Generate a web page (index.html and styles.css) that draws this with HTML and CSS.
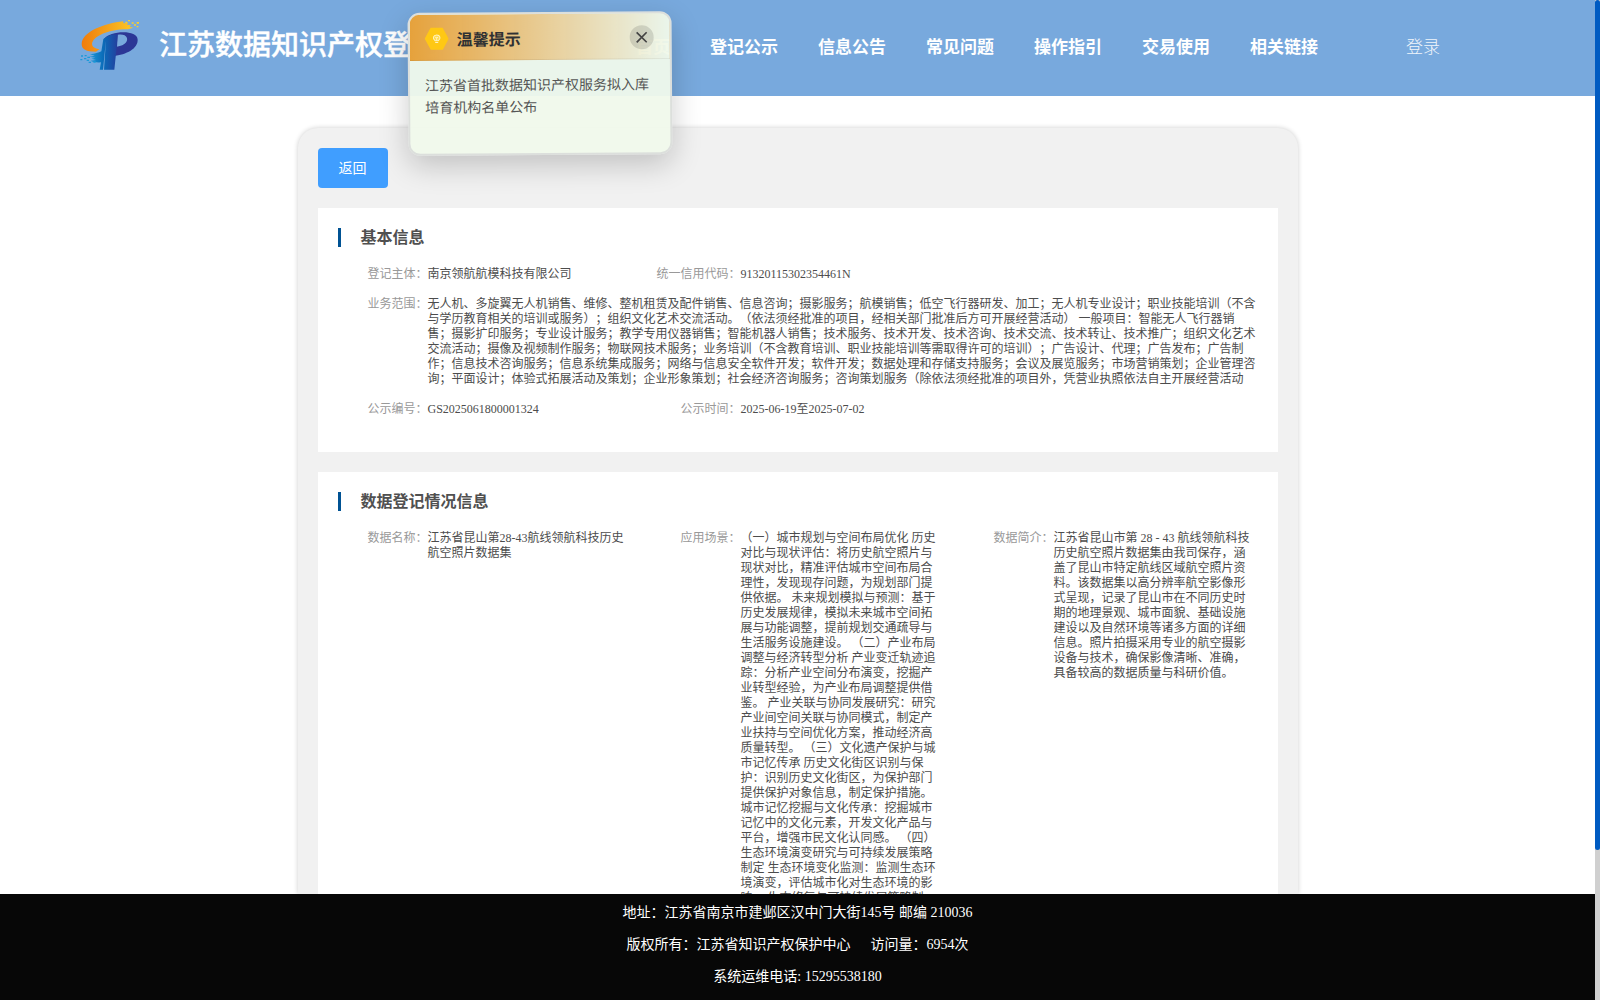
FILE: index.html
```html
<!DOCTYPE html>
<html lang="zh-CN">
<head>
  <meta charset="UTF-8">
  <title>江苏数据知识产权登记平台</title>
  <meta name="viewport" content="width=device-width, initial-scale=1.0">
  <link rel="stylesheet" href="styles.css">
</head>
<body>

  <div class="page">
    <header class="header">
      <svg class="logo" viewBox="60 57 180 156">
        <defs>
          <linearGradient id="gold" x1="0" y1="0" x2="1" y2="0">
            <stop offset="0" stop-color="#f07c0c"/>
            <stop offset="1" stop-color="#fcc826"/>
          </linearGradient>
          <linearGradient id="blue" x1="0" y1="0" x2="1" y2="0">
            <stop offset="0" stop-color="#1c9ad8"/>
            <stop offset="0.5" stop-color="#0b6bb8"/>
            <stop offset="1" stop-color="#233f9e"/>
          </linearGradient>
        </defs>
        <path fill="url(#gold)" d="M190 64C132 70 66 96 65 132C65 148 78 155 108 155L118 148C98 145 92 134 99 123C110 103 160 86 204 88L220 83L208 80L214 75L200 74L205 69L190 70Z"/>
        <path fill="#2c3796" d="M132 117C150 92 232 88 233 119C234 145 200 164 160 168L160 142C190 139 204 128 201 114C198 104 186 102 173 104L171 142L150 150Z"/>
        <path fill="url(#blue)" d="M138 112Q152 102 173 103L170 142L163 209H132L138 118L129 209H119L123 187Q100 188 92 182L108 180L94 176L106 173L88 170L104 167L90 163Q112 160 124 154L130 117Z"/>
        <path fill="#fcd02a" d="M204 60h6v4h-6zM196 65h6v4h-6zM215 67h6v4h-6zM230 66h7v5h-7zM222 73h6v4h-6zM230 78h5v4h-5z"/>
        <path fill="#1c9ad8" d="M63 166h6v4h-6zM74 165h6v4h-6zM82 170h8v4h-8zM61 177h6v4h-6zM72 174h7v4h-7zM80 179h7v4h-7zM86 185h7v4h-7zM100 184h7v4h-7z"/>
      </svg>
      <h1 class="site-name">江苏数据知识产权登记</h1>
      <nav class="nav">
        <a>首页</a>
        <a>登记公示</a>
        <a>信息公告</a>
        <a>常见问题</a>
        <a>操作指引</a>
        <a>交易使用</a>
        <a>相关链接</a>
      </nav>
      <a class="login">登录</a>
    </header>

    <main class="container">
      <button class="back">返回</button>

      <section class="card">
        <h2 class="card-title">基本信息</h2>
        <div class="row">
          <div class="item"><span class="label">登记主体：</span><span class="value">南京领航航模科技有限公司</span></div>
          <div class="item"><span class="label">统一信用代码：</span><span class="value">91320115302354461N</span></div>
        </div>
        <div class="row">
          <div class="item"><span class="label">业务范围：</span><span class="value">无人机、多旋翼无人机销售、维修、整机租赁及配件销售、信息咨询；摄影服务；航模销售；低空飞行器研发、加工；无人机专业设计；职业技能培训（不含<br>与学历教育相关的培训或服务）；组织文化艺术交流活动。（依法须经批准的项目，经相关部门批准后方可开展经营活动） 一般项目：智能无人飞行器销<br>售；摄影扩印服务；专业设计服务；教学专用仪器销售；智能机器人销售；技术服务、技术开发、技术咨询、技术交流、技术转让、技术推广；组织文化艺术<br>交流活动；摄像及视频制作服务；物联网技术服务；业务培训（不含教育培训、职业技能培训等需取得许可的培训）；广告设计、代理；广告发布；广告制<br>作；信息技术咨询服务；信息系统集成服务；网络与信息安全软件开发；软件开发；数据处理和存储支持服务；会议及展览服务；市场营销策划；企业管理咨<br>询；平面设计；体验式拓展活动及策划；企业形象策划；社会经济咨询服务；咨询策划服务（除依法须经批准的项目外，凭营业执照依法自主开展经营活动</span></div>
        </div>
        <div class="row">
          <div class="item"><span class="label">公示编号：</span><span class="value">GS2025061800001324</span></div>
          <div class="item"><span class="label">公示时间：</span><span class="value">2025-06-19至2025-07-02</span></div>
        </div>
      </section>

      <section class="card">
        <h2 class="card-title">数据登记情况信息</h2>
        <div class="row">
          <div class="item"><span class="label">数据名称：</span><span class="value">江苏省昆山第28-43航线领航科技历史<br>航空照片数据集</span></div>
          <div class="item"><span class="label">应用场景：</span><span class="value">（一）城市规划与空间布局优化 历史<br>对比与现状评估：将历史航空照片与<br>现状对比，精准评估城市空间布局合<br>理性，发现现存问题，为规划部门提<br>供依据。 未来规划模拟与预测：基于<br>历史发展规律，模拟未来城市空间拓<br>展与功能调整，提前规划交通疏导与<br>生活服务设施建设。 （二）产业布局<br>调整与经济转型分析 产业变迁轨迹追<br>踪：分析产业空间分布演变，挖掘产<br>业转型经验，为产业布局调整提供借<br>鉴。 产业关联与协同发展研究：研究<br>产业间空间关联与协同模式，制定产<br>业扶持与空间优化方案，推动经济高<br>质量转型。 （三）文化遗产保护与城<br>市记忆传承 历史文化街区识别与保<br>护：识别历史文化街区，为保护部门<br>提供保护对象信息，制定保护措施。<br>城市记忆挖掘与文化传承：挖掘城市<br>记忆中的文化元素，开发文化产品与<br>平台，增强市民文化认同感。 （四）<br>生态环境演变研究与可持续发展策略<br>制定 生态环境变化监测：监测生态环<br>境演变，评估城市化对生态环境的影<br>响。 生态修复与可持续发展策略制</span></div>
          <div class="item"><span class="label">数据简介：</span><span class="value">江苏省昆山市第 28 - 43 航线领航科技<br>历史航空照片数据集由我司保存，涵<br>盖了昆山市特定航线区域航空照片资<br>料。该数据集以高分辨率航空影像形<br>式呈现，记录了昆山市在不同历史时<br>期的地理景观、城市面貌、基础设施<br>建设以及自然环境等诸多方面的详细<br>信息。照片拍摄采用专业的航空摄影<br>设备与技术，确保影像清晰、准确，<br>具备较高的数据质量与科研价值。</span></div>
        </div>
      </section>
    </main>

    <footer class="footer">
      <p>地址：江苏省南京市建邺区汉中门大街145号 邮编 210036</p>
      <p>版权所有：江苏省知识产权保护中心<span class="visits">访问量：6954次</span></p>
      <p>系统运维电话: 15295538180</p>
    </footer>
  </div>

  <div class="scrollbar"><div class="thumb"></div></div>

  <div class="notice">
    <div class="notice-head">
      <svg class="notice-icon" viewBox="0 0 24 24">
        <path fill="#ffc814" d="M6 1H18L24 12L18 23H6L0 12Z"/>
        <g fill="none" stroke="#fff3c0" stroke-width="1">
          <path fill="#ffda50" d="M10.500 14C7.400 12 8.500 8.200 12 8.200S16.600 12 13.500 14Z"/>
          <path d="M10.500 15.700H13.500M12 14V11M10.700 10.500L12 11.500L13.300 10.500"/>
        </g>
      </svg>
      <span class="notice-title">温馨提示</span>
      <span class="notice-close">
        <svg viewBox="0 0 12 12"><path d="M1 1L11 11M11 1L1 11" stroke="#444" stroke-width="1.700"/></svg>
      </span>
    </div>
    <div class="notice-body">江苏省首批数据知识产权服务拟入库<br>培育机构名单公布</div>
  </div>

</body>
</html>
```
FILE: styles.css
```css
* {
  box-sizing: border-box;
}

body {
  margin: 0;
  height: 1000px;
  display: flex;
  overflow: hidden;
  background: #fff;
  font-family: "Liberation Serif", "Noto Sans CJK SC", serif;
  text-spacing-trim: space-all;
}

.page {
  flex: 1;
  height: 1000px;
  display: flex;
  flex-direction: column;
}

.header {
  flex: none;
  height: 96px;
  padding-left: 80px;
  display: flex;
  align-items: center;
  background: #78a9dd;
  color: #fff;
}

.logo {
  width: 60px;
  height: 52px;
  margin-top: -6px;
}

.site-name {
  width: 477px;
  margin: -5px 0 0 19px;
  font-size: 28px;
  font-weight: 500;
  line-height: 40px;
  white-space: nowrap;
  -webkit-text-stroke: 0.4px #fff;
}

.nav {
  display: flex;
  gap: 40px;
  font-size: 17px;
  font-weight: bold;
  line-height: 24px;
  margin-top: -1px;
}

.login {
  margin: -1px 0 0 88px;
  font-size: 17px;
  line-height: 24px;
  font-weight: 300;
  opacity: 0.9;
}

.container {
  flex: 1;
  min-height: 0;
  width: 1000px;
  margin: 32px auto 0;
  padding: 20px 20px 0;
  overflow: hidden;
  background: #f1f1f1;
  border-radius: 20px 20px 0 0;
  box-shadow: 0 0 5px rgba(0, 0, 0, 0.2);
}

.back {
  display: block;
  width: 70px;
  height: 40px;
  padding: 0 0 2px;
  border: 0;
  border-radius: 4px;
  background: #409eff;
  color: #fff;
  font: 14px "Noto Sans CJK SC", sans-serif;
}

.card {
  margin-top: 20px;
  padding: 20px 0 20px 20px;
  background: #fff;
}

.card-title {
  margin: 0 0 20px;
  padding-left: 20px;
  border-left: 3px solid #005293;
  font-size: 16px;
  line-height: 19px;
  color: #505050;
}

.row {
  display: flex;
  margin-bottom: 15px;
  font-size: 12px;
  line-height: 15px;
  white-space: nowrap;
}

.item {
  display: flex;
  width: 313px;
}

.label {
  flex: none;
  width: 90px;
  text-align: right;
  color: #999;
}

.value {
  color: #4c4c4c;
}

.footer {
  flex: none;
  height: 106px;
  padding-top: 3px;
  background: #070707;
  color: #fff;
  font-size: 14px;
  text-align: center;
}

.footer p {
  margin: 0;
  line-height: 32px;
}

.visits {
  margin-left: 20px;
}

.scrollbar {
  width: 5px;
  background: #d0d0d0;
}

.thumb {
  height: 850px;
  border-radius: 3px;
  background: #005bc2;
}

.notice {
  position: absolute;
  left: 408px;
  top: 12px;
  width: 264px;
  height: 143px;
  border: 2px solid #dcdfdc;
  border-radius: 12px;
  overflow: hidden;
  background: rgba(240, 249, 235, 0.95);
  box-shadow: 0 10px 30px rgba(0, 0, 0, 0.2);
  transform: rotate(-0.4deg);
}

.notice-head {
  display: flex;
  align-items: center;
  height: 46px;
  padding: 2px 16px 0 15px;
  background: linear-gradient(90deg, #e6a23c, rgba(230, 162, 60, 0));
  border-bottom: 1px solid rgba(0, 0, 0, 0.06);
}

.notice-icon {
  width: 24px;
  height: 24px;
}

.notice-title {
  margin-left: 8px;
  font-size: 16px;
  font-weight: bold;
  color: #303133;
}

.notice-close {
  display: flex;
  align-items: center;
  justify-content: center;
  width: 24px;
  height: 24px;
  margin-left: auto;
  border-radius: 50%;
  background: rgba(0, 0, 0, 0.12);
}

.notice-close svg {
  width: 12px;
  height: 12px;
}

.notice-body {
  padding: 15px 15px;
  font-size: 14px;
  line-height: 22.4px;
  color: #555;
}
```
